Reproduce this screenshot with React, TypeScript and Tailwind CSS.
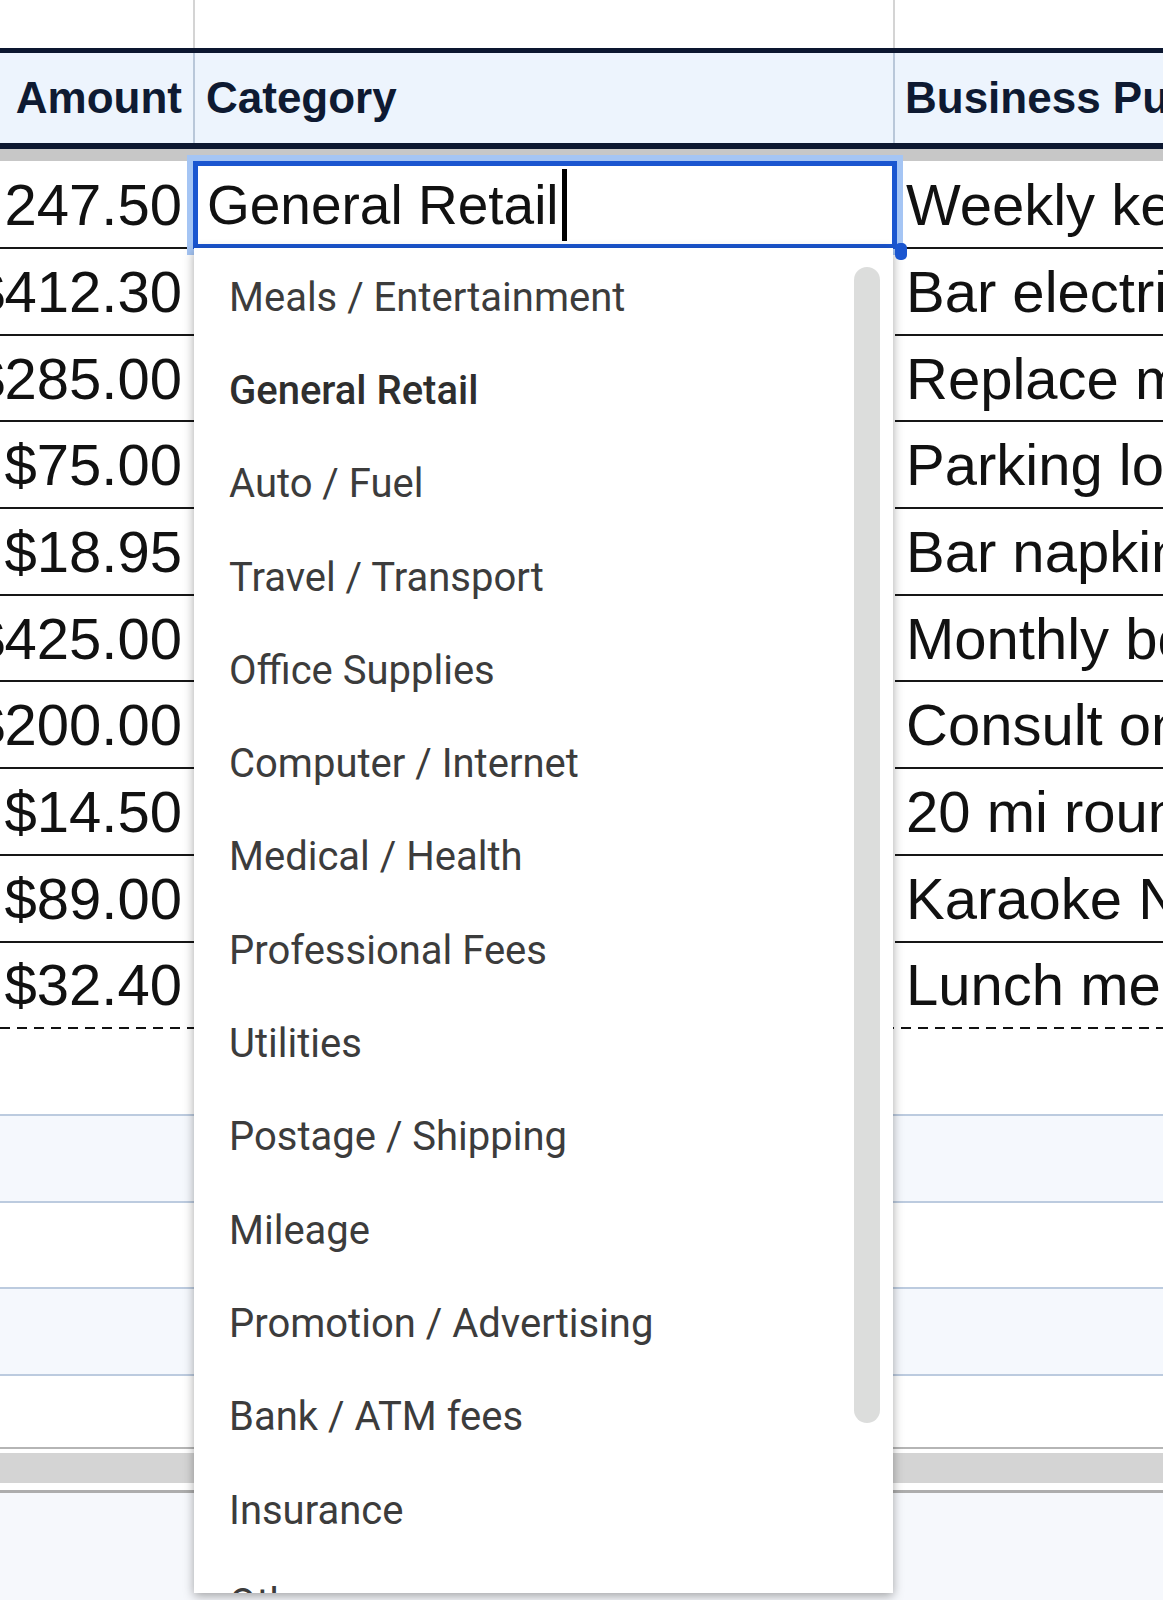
import React from "react";

const amounts = [
  "$1,247.50",
  "$412.30",
  "$285.00",
  "$75.00",
  "$18.95",
  "$425.00",
  "$200.00",
  "$14.50",
  "$89.00",
  "$32.40",
];

const purposes = [
  "Weekly keg delivery",
  "Bar electrical repair",
  "Replace mixer gun",
  "Parking lot sweeping",
  "Bar napkins & straws",
  "Monthly bookkeeping",
  "Consult on lease",
  "20 mi round trip to supplier",
  "Karaoke Night flyers",
  "Lunch meeting with vendor",
];

const categories = [
  "Meals / Entertainment",
  "General Retail",
  "Auto / Fuel",
  "Travel / Transport",
  "Office Supplies",
  "Computer / Internet",
  "Medical / Health",
  "Professional Fees",
  "Utilities",
  "Postage / Shipping",
  "Mileage",
  "Promotion / Advertising",
  "Bank / ATM fees",
  "Insurance",
  "Other",
];

export default function App() {
  return (
    <div className="relative w-[1163px] h-[1600px] overflow-hidden bg-white text-[#111] font-['Liberation_Sans',Arial,sans-serif]">
      {/* strip above the header */}
      <div className="flex h-[48px]">
        <div className="w-[195px] shrink-0 border-r-2 border-[#d4d4d4]" />
        <div className="w-[700px] shrink-0 border-r-2 border-[#d4d4d4]" />
        <div className="flex-1" />
      </div>

      {/* header */}
      <div className="flex h-[101px] border-t-[5px] border-b-[6px] border-[#0c1730] bg-[#edf4fd] text-[44px] font-bold text-[#0e1a32] whitespace-nowrap">
        <div className="w-[195px] shrink-0 flex items-center justify-end pr-[11px] border-r-2 border-[#b9c7d9]">
          Amount
        </div>
        <div className="w-[700px] shrink-0 flex items-center pl-[11px] border-r-2 border-[#b9c7d9]">
          Category
        </div>
        <div className="flex-1 flex items-center pl-[10px] overflow-hidden">
          Business Purpose
        </div>
      </div>

      {/* band under the header */}
      <div className="h-[12px] bg-[#c7c7c7]" />

      {/* data rows */}
      {amounts.map((amt, i) => {
        const first = i === 0;
        const last = i === amounts.length - 1;
        const line = last ? "" : "border-b-2 border-[#161616]";
        return (
          <div
            key={amt}
            className={`flex text-[58px] whitespace-nowrap ${first ? "h-[88px]" : last ? "h-[84.7px]" : "h-[86.7px]"}`}
          >
            <div
              className={`w-[195px] shrink-0 flex items-center justify-end overflow-hidden pr-[13px] ${line}`}
            >
              <span className="shrink-0">{amt}</span>
            </div>
            <div className="w-[700px] shrink-0">
              {first && (
                <div className="relative z-10 -ml-[2px] w-[704px] h-[88px] flex items-center border-[5px] border-[#1b56d0] bg-white pl-[9px] text-[55px] shadow-[0_0_0_6px_#a5c5f4]">
                  <span>General Retail</span>
                  <span className="ml-[3px] inline-block w-[5px] h-[72px] bg-black" />
                </div>
              )}
            </div>
            <div className={`flex-1 flex items-center overflow-hidden pl-[11px] ${line}`}>
              {purposes[i]}
            </div>
          </div>
        );
      })}

      {/* dashed end-of-data line */}
      <div className="h-[2px] bg-[linear-gradient(90deg,#111_0_10px,transparent_10px_17px)] bg-[length:17px_2px]" />

      {/* empty rows */}
      <div className="h-[84.7px] bg-white" />
      <div className="h-[86.7px] border-t-2 border-[#bccbdf] bg-[#f5f8fd]" />
      <div className="h-[86.7px] border-t-2 border-[#bccbdf] bg-white" />
      <div className="h-[86.7px] border-t-2 border-[#bccbdf] bg-[#f5f8fd]" />
      <div className="h-[73px] border-t-2 border-[#bccbdf] bg-white" />
      <div className="h-[2px] bg-[#b5b5b5]" />
      <div className="h-[4px] bg-white" />
      <div className="h-[30px] bg-[#d4d4d4]" />
      <div className="h-[7px] bg-white" />
      <div className="h-[3px] bg-[#adadad]" />
      <div className="h-[120px] bg-[#f6f8fc]" />

      {/* fill handle of the edited cell */}
      <div className="absolute left-[895px] top-[243px] z-30 w-[12px] h-[17px] rounded-[5px] bg-[#1b56d0]" />

      {/* category dropdown */}
      <div className="absolute left-[194px] top-[248px] z-20 w-[699px] h-[1345px] overflow-hidden bg-white shadow-[0_3px_10px_rgba(0,0,0,0.35)] font-['Roboto',sans-serif]">
        <div className="pt-[3px]">
          {categories.map((c) => (
            <div
              key={c}
              className={`h-[93.3px] flex items-center pl-[35px] text-[40px] whitespace-nowrap ${
                c === "General Retail" ? "font-medium text-[#2e2e2e]" : "text-[#3c3c3c]"
              }`}
            >
              {c}
            </div>
          ))}
        </div>
        <div className="absolute right-[13px] top-[19px] w-[26px] h-[1156px] rounded-full bg-[#dcdddc]" />
      </div>
    </div>
  );
}
